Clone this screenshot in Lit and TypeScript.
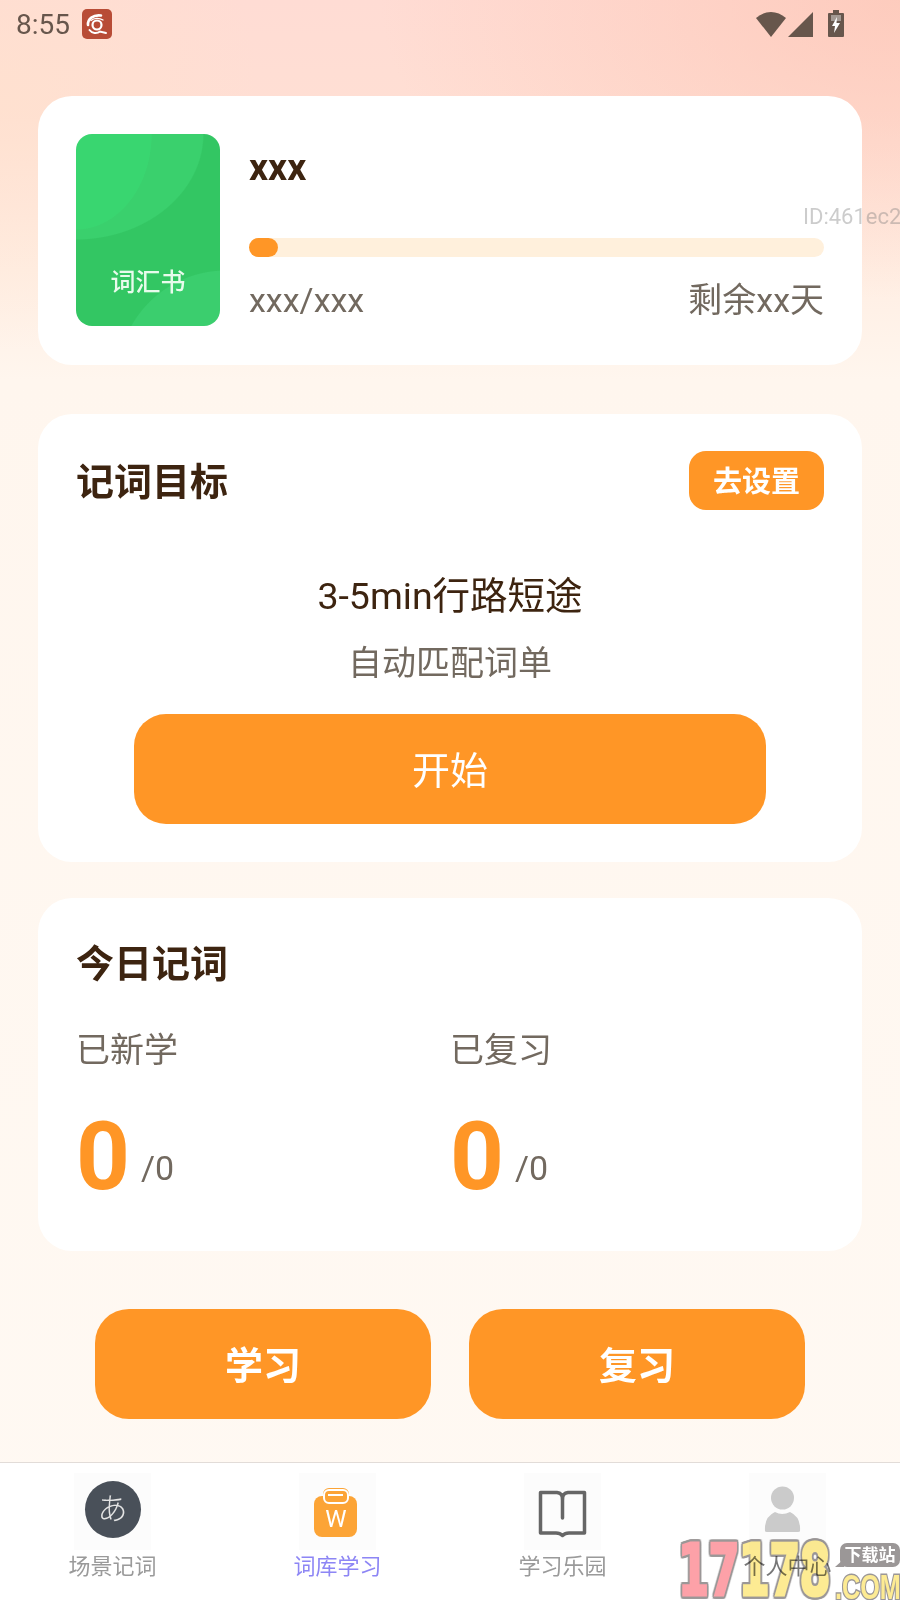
import { LitElement, css, html } from "lit";
import { customElement } from "lit/decorators.js";

@customElement("app-root")
export class AppRoot extends LitElement {
  render() {
    return html`
      <div class="page">
        <div class="status">
          <span class="time">8:55</span>
          <svg class="app-icon" viewBox="0 0 30 30">
            <rect width="30" height="30" rx="5" fill="#b84c36" />
            <g fill="none" stroke="#fff" stroke-linecap="round">
              <path d="M6 16C5.500 10 11 5.500 19 6.500" stroke-width="2.600" />
              <path d="M9 11.500C12 9 17 8.500 21 11" stroke-width="1.400" />
              <circle cx="15" cy="16" r="4.500" stroke-width="2.200" />
              <path d="M7.500 21C10 24.500 15 25 18 22.500L24 24" stroke-width="2" />
            </g>
          </svg>
          <span class="spacer"></span>
          <svg class="sys wifi" width="30" height="26" viewBox="0 0 30 26">
            <path d="M0 7Q7 1 15 1T30 7L15 26Z" fill="#67564c" />
          </svg>
          <svg class="sys" width="26" height="26" viewBox="0 0 26 26">
            <path d="M25 1V26H0Z" fill="#67564c" />
          </svg>
          <svg class="sys batt" width="16" height="27" viewBox="0 0 16 27">
            <path d="M5 0h6v3h4a1 1 0 0 1 1 1v22a1 1 0 0 1-1 1H1a1 1 0 0 1-1-1V4a1 1 0 0 1 1-1h4Z" fill="#67564c" />
            <rect x="3" y="5" width="10" height="6" fill="#fff" opacity="0.4" />
            <path d="M9 7 4 16h3l-1 7 6-10H8.500Z" fill="#fff" />
          </svg>
        </div>

        <main class="main">
          <section class="card book">
            <div class="cover"><span>词汇书</span></div>
            <div class="book-info">
              <div class="book-title">xxx</div>
              <div class="track"><div class="fill" style="width: 5%"></div></div>
              <div class="book-meta">
                <span>xxx/xxx</span>
                <span>剩余xx天</span>
              </div>
            </div>
          </section>

          <section class="card goal">
            <div class="goal-head">
              <h2>记词目标</h2>
              <button class="set">去设置</button>
            </div>
            <div class="plan">3-5min行路短途</div>
            <div class="plan-sub">自动匹配词单</div>
            <button class="start">开始</button>
          </section>

          <section class="card today">
            <h2>今日记词</h2>
            <div class="stats">
              <div>
                <div class="stat-label">已新学</div>
                <div class="stat-value"><b>0</b><span>/0</span></div>
              </div>
              <div>
                <div class="stat-label">已复习</div>
                <div class="stat-value"><b>0</b><span>/0</span></div>
              </div>
            </div>
          </section>

          <div class="actions">
            <button>学习</button>
            <button>复习</button>
          </div>
        </main>

        <nav class="nav">
          <div class="tab">
            <div class="tab-icon">
              <div class="kana">あ</div>
            </div>
            <span>场景记词</span>
          </div>
          <div class="tab active">
            <div class="tab-icon">
              <svg width="77" height="77" viewBox="0 0 77 77">
                <rect x="15" y="23" width="43" height="41" rx="8" fill="#fca436" />
                <rect x="24" y="15" width="26" height="15" rx="6" fill="#fca436" />
                <rect x="25" y="17" width="24" height="13" rx="5" fill="none" stroke="#fff" stroke-width="2" />
                <path d="M29 22h15" stroke="#fff" stroke-width="2" />
                <text x="37" y="54" text-anchor="middle" class="w">W</text>
              </svg>
            </div>
            <span>词库学习</span>
          </div>
          <div class="tab">
            <div class="tab-icon">
              <svg width="77" height="77" viewBox="0 0 77 77">
                <g fill="none" stroke="#666" stroke-width="3.500" stroke-linejoin="round" stroke-linecap="round">
                  <path d="M16.500 19.500H33Q38.500 20 38.500 26Q38.500 20 44 19.500H60.500V60H45Q41 60 38.500 62.500Q36 60 32 60H16.500Z" />
                  <path d="M38.500 26V45" />
                </g>
              </svg>
            </div>
            <span>学习乐园</span>
          </div>
          <div class="tab dim">
            <div class="tab-icon">
              <svg width="77" height="77" viewBox="0 0 77 77">
                <circle cx="33.500" cy="25" r="11.500" fill="#cbcbcb" />
                <path d="M16 58Q15 44 26 39Q33 43 41 39Q52 44 51 58Q51 59 49 59H18Q16 59 16 58Z" fill="#cbcbcb" />
              </svg>
            </div>
            <span>个人中心</span>
          </div>
        </nav>

        <div class="build-id">ID:461ec2</div>
        <div class="mark">
          <div class="digits"><i class="pink">1</i><i class="pink">7</i><i>1</i><i>7</i><i>8</i></div>
          <div class="bubble">下载站</div>
          <div class="com">.COM</div>
        </div>
      </div>
    `;
  }

  static styles = css`
    :host {
      display: block;
      font-family: Roboto, "Noto Sans CJK SC", sans-serif;
      color: #3d2410;
    }

    * {
      box-sizing: border-box;
    }

    .page {
      position: relative;
      width: 900px;
      height: 1600px;
      overflow: hidden;
      display: flex;
      flex-direction: column;
      background:
        radial-gradient(ellipse 520px 300px at 100% 0, rgba(253, 198, 182, 0.75), rgba(253, 198, 182, 0)),
        radial-gradient(ellipse 260px 260px at 0 90px, rgba(255, 226, 205, 0.6), rgba(255, 226, 205, 0)),
        linear-gradient(180deg, #ffdcd4 0, #ffdfd4 110px, #ffeee3 270px, #fff6ee 380px, #fff9f3 100%);
    }

    .status {
      height: 50px;
      padding: 9px 56px 0 16px;
      display: flex;
      align-items: flex-start;
      color: #67564c;
    }

    .time {
      font-size: 28px;
      line-height: 32px;
    }

    .app-icon {
      width: 30px;
      height: 30px;
      margin-left: 12px;
    }

    .spacer {
      flex: 1;
    }

    .sys {
      margin-top: 2px;
      margin-left: 3px;
    }

    .wifi {
      margin-right: -1px;
    }

    .batt {
      margin-top: 1px;
      margin-left: 14px;
    }

    .main {
      flex: 1;
      padding: 46px 38px 0;
    }

    .card {
      background: #fff;
      border-radius: 34px;
    }

    .book {
      height: 269px;
      padding: 38px;
      display: flex;
      gap: 29px;
    }

    .cover {
      width: 144px;
      height: 192px;
      flex: none;
      border-radius: 16px;
      overflow: hidden;
      display: flex;
      align-items: flex-end;
      justify-content: center;
      padding-bottom: 26px;
      color: #e8fbec;
      font-size: 25px;
      font-weight: 500;
      line-height: 34px;
      background:
        radial-gradient(ellipse 76px 96px at 0 0, #39d670, #39d670 99%, transparent),
        radial-gradient(ellipse 128px 106px at 0 0, #3ad06d, #3ad06d 99%, transparent),
        radial-gradient(circle at 150px 245px, #3bce6e 108px, transparent 109px),
        #33c663;
    }

    .book-info {
      flex: 1;
      display: flex;
      flex-direction: column;
    }

    .book-title {
      font-size: 37.500px;
      font-weight: 700;
      line-height: 44px;
      height: 44px;
      margin-top: 11px;
    }

    .track {
      height: 19px;
      margin-top: 49px;
      border-radius: 10px;
      background: #fff0dc;
    }

    .fill {
      height: 100%;
      border-radius: 10px;
      background: #ff9626;
    }

    .book-meta {
      margin-top: 21px;
      display: flex;
      justify-content: space-between;
      font-size: 34px;
      line-height: 44px;
      color: #72695f;
    }

    h2 {
      margin: 0;
      font-size: 38px;
      font-weight: 700;
      line-height: 50px;
    }

    .goal {
      height: 448px;
      margin-top: 49px;
      padding: 43px 38px 0;
      display: flex;
      flex-direction: column;
      align-items: center;
    }

    .goal-head {
      align-self: stretch;
      height: 51px;
      display: flex;
      justify-content: space-between;
      align-items: flex-start;
    }

    button {
      border: none;
      font-family: inherit;
      color: #fff;
      background: #ff9626;
    }

    .set {
      width: 135px;
      height: 59px;
      margin-top: -6px;
      padding: 0 0 4px;
      border-radius: 17px;
      font-size: 29px;
      font-weight: 700;
    }

    .plan {
      margin-top: 63px;
      font-size: 37.500px;
      line-height: 50px;
    }

    .plan-sub {
      margin-top: 19px;
      font-size: 34px;
      line-height: 46px;
      color: #72695f;
    }

    .start {
      width: 632px;
      height: 110px;
      margin-top: 28px;
      padding: 0 0 4px;
      border-radius: 32px;
      font-size: 38px;
    }

    .today {
      height: 353px;
      margin-top: 36px;
      padding: 41px 38px 0;
    }

    .stats {
      margin-top: 38px;
      display: grid;
      grid-template-columns: 374px 374px;
    }

    .stat-label {
      font-size: 34px;
      line-height: 46px;
      color: #72695f;
    }

    .stat-value {
      margin-top: 37px;
      display: flex;
      align-items: flex-end;
      gap: 11px;
    }

    .stat-value b {
      font-size: 94px;
      font-weight: 700;
      line-height: 94px;
      color: #ff9626;
    }

    .stat-value span {
      margin-bottom: 16px;
      font-size: 34px;
      line-height: 40px;
      color: #72695f;
    }

    .actions {
      margin-top: 58px;
      padding: 0 57px;
      display: flex;
      gap: 38px;
    }

    .actions button {
      width: 336px;
      height: 110px;
      padding: 0 0 4px;
      border-radius: 34px;
      font-size: 38px;
      font-weight: 700;
    }

    .nav {
      height: 138px;
      padding-top: 10px;
      display: grid;
      grid-template-columns: repeat(4, 225px);
      border-top: 1px solid #e2dcd8;
      background: #fff;
    }

    .tab {
      display: flex;
      flex-direction: column;
      align-items: center;
      font-size: 22px;
      line-height: 30px;
      color: #9a9a9a;
    }

    .tab.active {
      color: #8d86f5;
    }

    .tab.dim {
      color: #777;
    }

    .tab-icon {
      width: 77px;
      height: 77px;
      margin-bottom: 2px;
      background: #fcfcfc;
      display: flex;
      align-items: center;
      justify-content: center;
    }

    .kana {
      width: 56px;
      height: 57px;
      margin-bottom: 4px;
      border-radius: 50%;
      background: #495059;
      color: #e4e4e4;
      font-size: 30px;
      font-weight: 300;
      line-height: 56px;
      text-align: center;
    }

    .w {
      font: 400 24px Roboto, sans-serif;
      fill: #fff;
    }

    .build-id {
      position: absolute;
      top: 204px;
      left: 803px;
      font-size: 22px;
      line-height: 26px;
      white-space: nowrap;
      color: rgba(120, 120, 120, 0.38);
    }

    .mark {
      position: absolute;
      left: 676px;
      top: 1540px;
      width: 224px;
      height: 60px;
      mix-blend-mode: multiply;
    }

    .digits {
      position: absolute;
      left: 2px;
      top: 0;
      display: flex;
      font: 700 72px/60px "DejaVu Sans", sans-serif;
      color: #fdeb93;
      -webkit-text-stroke: 3px currentColor;
      filter: drop-shadow(2px 0 #9b9797) drop-shadow(-2px 0 #9b9797) drop-shadow(0 2px #9b9797) drop-shadow(0 -2px #9b9797);
      transform: scaleX(0.62);
      transform-origin: 0 0;
    }

    .digits i {
      font-style: normal;
      width: 49px;
      text-align: center;
    }

    .digits .pink {
      color: #fda1a8;
    }

    .bubble {
      position: absolute;
      left: 164px;
      top: 3px;
      width: 60px;
      height: 24px;
      border-radius: 7px;
      background: #9b9797;
      color: #fff;
      font-size: 17px;
      font-weight: 700;
      line-height: 24px;
      text-align: center;
    }

    .bubble::before {
      content: "";
      position: absolute;
      left: -5px;
      bottom: 0;
      border-style: solid;
      border-width: 0 0 8px 9px;
      border-color: transparent transparent #9b9797 transparent;
    }

    .com {
      position: absolute;
      left: 159px;
      top: 33px;
      font: 700 35px/27px "Liberation Sans", sans-serif;
      color: #fdeb93;
      -webkit-text-stroke: 3px #9b9797;
      paint-order: stroke fill;
      white-space: nowrap;
      transform: scaleX(0.72);
      transform-origin: 0 0;
    }
  `;
}
